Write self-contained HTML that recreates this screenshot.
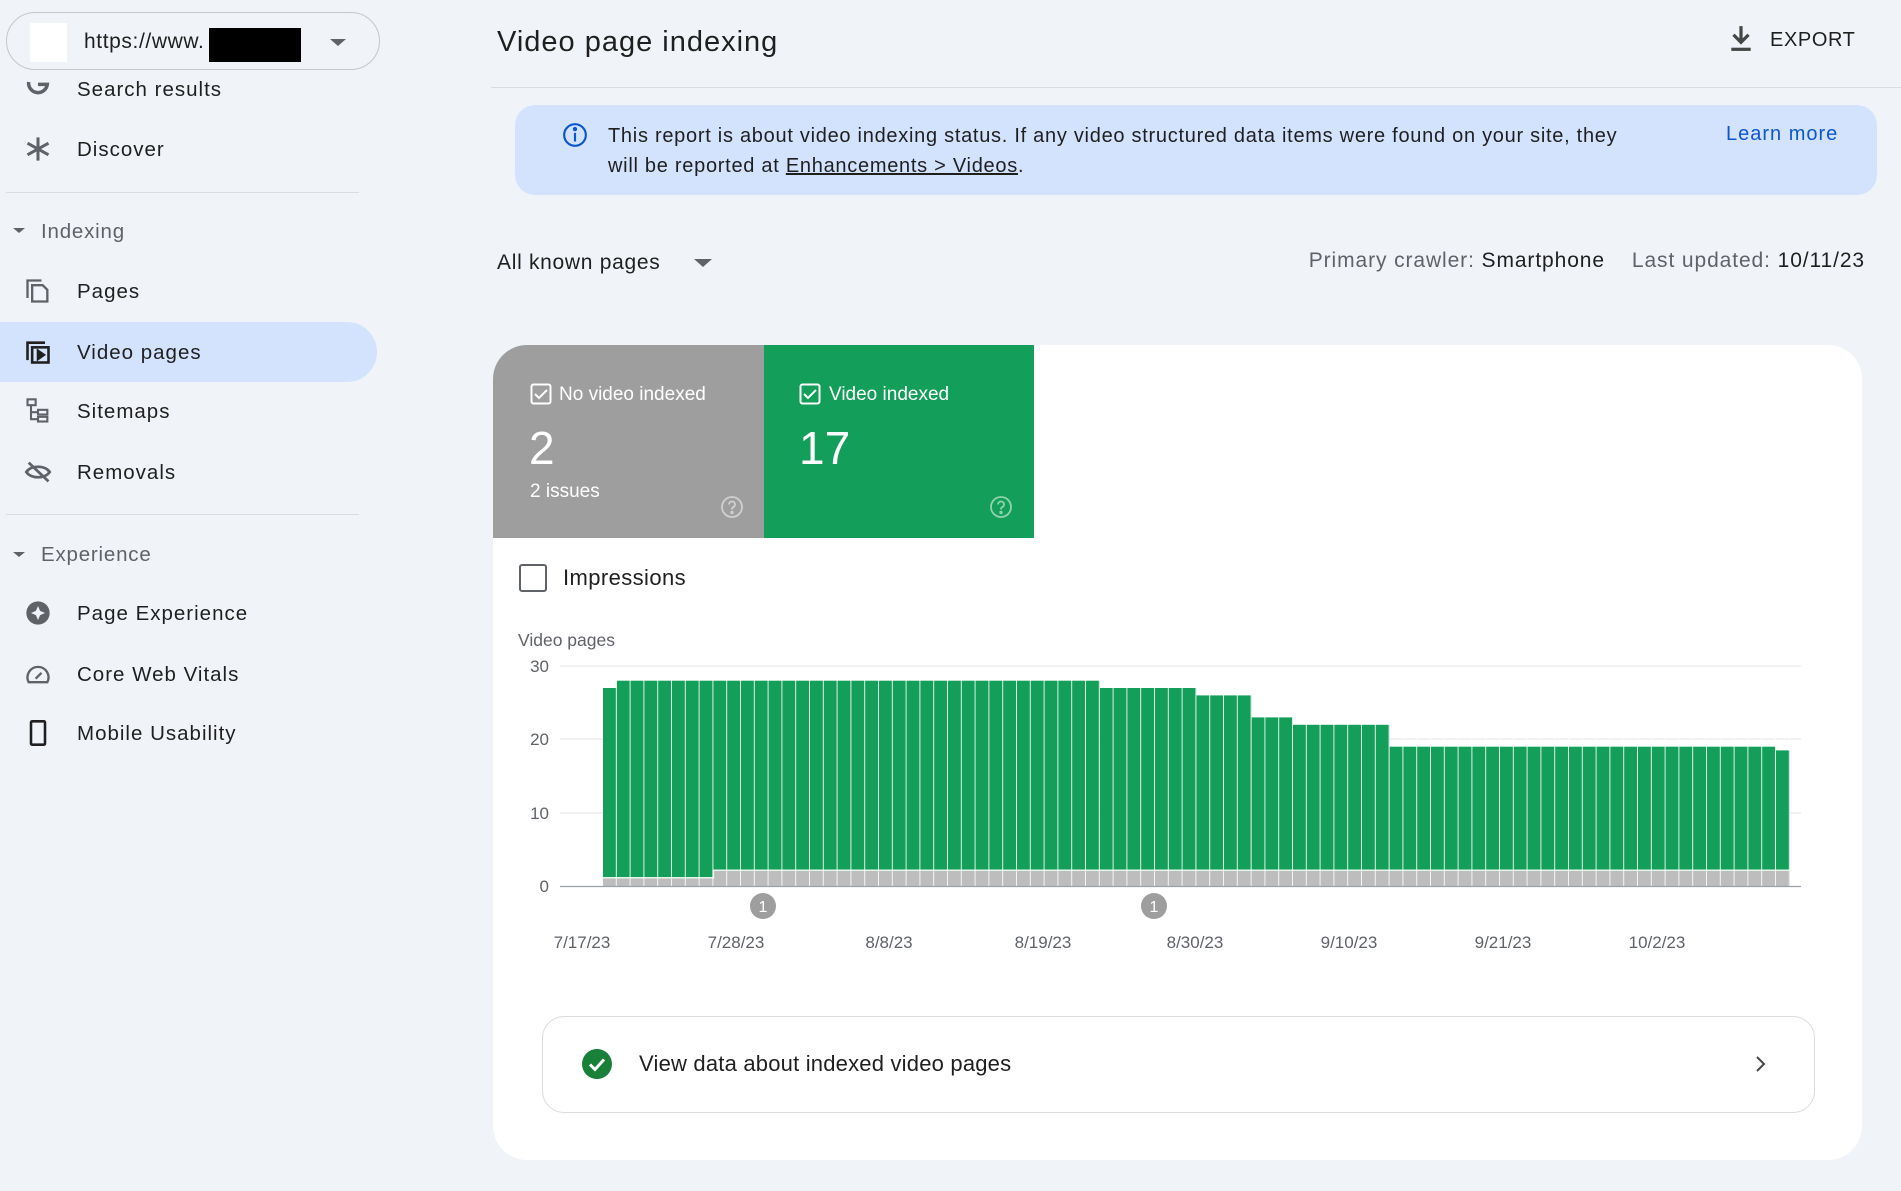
<!DOCTYPE html>
<html><head><meta charset="utf-8"><style>
*{box-sizing:border-box;margin:0;padding:0}
body{width:1901px;height:1191px;background:#f0f4f9;font-family:"Liberation Sans",sans-serif;color:#1f1f1f;position:relative;overflow:hidden}
.a{position:absolute;white-space:nowrap}
.nav{position:absolute;left:77px;font-size:20.5px;letter-spacing:1px;color:#1f1f1f;transform:translateY(-50%)}
.ico{position:absolute;left:24px;width:28px;height:28px;transform:translateY(-50%)}
.sec{position:absolute;left:41px;font-size:20.5px;letter-spacing:0.8px;color:#5f6368;transform:translateY(-50%)}
.tri{position:absolute;width:0;height:0;border-left:6px solid transparent;border-right:6px solid transparent;border-top:6px solid #5f6368}
</style></head><body>

<!-- sidebar -->
<div class="nav" style="top:90px">Search results</div>
<svg class="ico" style="top:89px" viewBox="0 0 24 24"><path d="M4 6a8 8 0 1 0 16 2h-8" fill="none" stroke="#5f6368" stroke-width="3"/></svg>
<div class="a" style="left:6px;top:12px;width:374px;height:58px;border:1px solid #c4c7c5;border-radius:29px;background:#f0f4f9"></div>
<div class="a" style="left:30px;top:23px;width:37px;height:39px;background:#fff"></div>
<div class="a" style="left:84px;top:30px;font-size:21px;letter-spacing:0.6px;color:#1f1f1f">https://www.</div>
<div class="a" style="left:209px;top:28px;width:92px;height:34px;background:#000"></div>
<div class="tri" style="left:330px;top:39px;border-width:7px 8px 0 8px"></div>

<div class="nav" style="top:150px">Discover</div>
<svg class="ico" style="top:149px" viewBox="0 0 24 24"><g stroke="#5f6368" stroke-width="2.6"><path d="M12 2v20M3 7l18 10M3 17l18-10"/></g></svg>
<div class="a" style="left:6px;top:192px;width:353px;height:1px;background:#dadce0"></div>
<div class="tri" style="left:13px;top:228px;border-width:5px 6px 0 6px"></div>
<div class="sec" style="top:232px">Indexing</div>
<div class="nav" style="top:292px">Pages</div>
<svg class="ico" style="top:291px" viewBox="0 0 24 24" fill="none" stroke="#5f6368" stroke-width="2"><path d="M3 18V3h12"/><path d="M7 7h9l4 4v10H7z"/></svg>
<div class="a" style="left:0;top:322px;width:377px;height:60px;background:#d3e3fd;border-radius:0 30px 30px 0"></div>
<div class="nav" style="top:353px">Video pages</div>
<svg class="ico" style="top:352px" viewBox="0 0 24 24" fill="none" stroke="#1f1f1f" stroke-width="2.2"><path d="M3 19V4h15"/><rect x="7" y="8" width="14" height="13"/><path d="M12 11v7l5-3.5z" fill="#1f1f1f"/></svg>
<div class="nav" style="top:412px">Sitemaps</div>
<svg class="ico" style="top:411px" viewBox="0 0 24 24" fill="none" stroke="#5f6368" stroke-width="1.8"><rect x="3" y="2" width="7" height="5"/><rect x="12" y="11" width="8" height="4"/><rect x="12" y="17" width="8" height="4"/><path d="M6 7v12h6M6 13h6"/></svg>
<div class="nav" style="top:473px">Removals</div>
<svg class="ico" style="top:472px" viewBox="0 0 24 24" fill="none" stroke="#5f6368" stroke-width="2.4"><path d="M2 12c4-6 16-6 20 0c-4 6-16 6-20 0z"/><path d="M4 4l17 16"/></svg>
<div class="a" style="left:6px;top:514px;width:353px;height:1px;background:#dadce0"></div>
<div class="tri" style="left:13px;top:552px;border-width:5px 6px 0 6px"></div>
<div class="sec" style="top:555px">Experience</div>
<div class="nav" style="top:614px">Page Experience</div>
<svg class="ico" style="top:613px" viewBox="0 0 24 24"><circle cx="12" cy="12" r="10" fill="#5f6368"/><path d="M12 6l1.8 4.2L18 12l-4.2 1.8L12 18l-1.8-4.2L6 12l4.2-1.8z" fill="#f0f4f9"/></svg>
<div class="nav" style="top:675px">Core Web Vitals</div>
<svg class="ico" style="top:674px" viewBox="0 0 24 24" fill="none" stroke="#5f6368" stroke-width="2"><path d="M4 19a9 9 0 1 1 16 0z"/><path d="M10 16l5-5"/></svg>
<div class="nav" style="top:734px">Mobile Usability</div>
<svg class="ico" style="top:733px" viewBox="0 0 24 24" fill="none" stroke="#1f1f1f" stroke-width="2.2"><rect x="6" y="2" width="12" height="20" rx="1"/></svg>

<!-- header -->
<div class="a" style="left:497px;top:26px;font-size:29px;letter-spacing:1px;color:#1f1f1f">Video page indexing</div>
<svg class="a" style="left:1728px;top:24px" width="26" height="28" viewBox="0 0 24 26"><path d="M12 2v14M5 10l7 7 7-7" fill="none" stroke="#444746" stroke-width="3"/><rect x="3" y="22" width="18" height="3" fill="#444746"/></svg>
<div class="a" style="left:1770px;top:29px;font-size:20px;color:#1f1f1f;letter-spacing:0.6px">EXPORT</div>
<div class="a" style="left:491px;top:87px;width:1410px;height:1px;background:#dadce0"></div>

<!-- banner -->
<div class="a" style="left:515px;top:105px;width:1362px;height:90px;background:#d3e3fd;border-radius:20px"></div>
<svg class="a" style="left:562px;top:122px" width="26" height="26" viewBox="0 0 24 24" fill="none" stroke="#0b57d0" stroke-width="2"><circle cx="12" cy="12" r="10"/><path d="M12 10v8"/><circle cx="12" cy="6.5" r="1" fill="#0b57d0"/></svg>
<div class="a" style="left:608px;top:121px;font-size:20px;line-height:30px;letter-spacing:0.72px;color:#1f1f1f">This report is about video indexing status. If any video structured data items were found on your site, they<br>will be reported at <span style="text-decoration:underline">Enhancements &gt; Videos</span>.</div>
<div class="a" style="left:1726px;top:123px;font-size:20px;letter-spacing:1px;color:#0b57d0">Learn more</div>

<div class="a" style="left:497px;top:251px;font-size:21px;letter-spacing:0.7px;color:#1f1f1f">All known pages</div>
<div class="tri" style="left:694px;top:259px;border-width:8px 9px 0 9px"></div>
<div class="a" style="right:36px;top:249px;font-size:21px;letter-spacing:0.9px;color:#5f6368">Primary crawler: <span style="color:#1f1f1f">Smartphone</span>&nbsp;&nbsp;&nbsp; Last updated: <span style="color:#1f1f1f">10/11/23</span></div>

<!-- card -->
<div class="a" style="left:493px;top:345px;width:1369px;height:815px;background:#fff;border-radius:34px;overflow:hidden">
  <div class="a" style="left:0;top:0;width:271px;height:193px;background:#9e9e9e"></div>
  <div class="a" style="left:271px;top:0;width:270px;height:193px;background:#139e59"></div>
</div>
<svg class="a" style="left:530px;top:383px" width="22" height="22" viewBox="0 0 22 22" fill="none" stroke="#fff" stroke-width="2"><rect x="1.5" y="1.5" width="19" height="19" rx="2"/><path d="M5 11l4 4 8-8"/></svg>
<div class="a" style="left:559px;top:384px;font-size:19px;color:#fff">No video indexed</div>
<div class="a" style="left:529px;top:421px;font-size:46px;color:#fff">2</div>
<div class="a" style="left:530px;top:481px;font-size:19px;color:#fff">2 issues</div>
<svg class="a" style="left:720px;top:495px" width="24" height="24" viewBox="0 0 24 24" fill="none" stroke="#d0d0d0" stroke-width="1.8"><circle cx="12" cy="12" r="10"/><path d="M9 9.5a3 3 0 1 1 4 2.8c-1 .4-1 1.2-1 2.2"/><circle cx="12" cy="17.5" r=".8" fill="#d0d0d0"/></svg>
<svg class="a" style="left:799px;top:383px" width="22" height="22" viewBox="0 0 22 22" fill="none" stroke="#fff" stroke-width="2"><rect x="1.5" y="1.5" width="19" height="19" rx="2"/><path d="M5 11l4 4 8-8"/></svg>
<div class="a" style="left:829px;top:384px;font-size:19px;color:#fff">Video indexed</div>
<div class="a" style="left:799px;top:421px;font-size:46px;color:#fff">17</div>
<svg class="a" style="left:989px;top:495px" width="24" height="24" viewBox="0 0 24 24" fill="none" stroke="#8fd3ae" stroke-width="1.8"><circle cx="12" cy="12" r="10"/><path d="M9 9.5a3 3 0 1 1 4 2.8c-1 .4-1 1.2-1 2.2"/><circle cx="12" cy="17.5" r=".8" fill="#8fd3ae"/></svg>

<div class="a" style="left:519px;top:564px;width:28px;height:28px;border:2px solid #5f6368;border-radius:3px"></div>
<div class="a" style="left:563px;top:565px;font-size:22px;letter-spacing:0.4px;color:#1f1f1f">Impressions</div>
<div class="a" style="left:518px;top:630px;font-size:17.5px;color:#5f6368">Video pages</div>

<!-- chart -->
<svg class="a" style="left:0;top:0" width="1901" height="1191">
<defs><pattern id="g" patternUnits="userSpaceOnUse" x="603" y="0" width="13.8" height="10"><rect x="12.8" y="0" width="1" height="10" fill="#fff" opacity=".85"/></pattern></defs>
<g font-family="Liberation Sans" font-size="17" fill="#5f6368" text-anchor="end">
<text x="549" y="672">30</text><text x="549" y="745">20</text><text x="549" y="819">10</text><text x="549" y="892">0</text></g>
<g stroke="#e8eaed" stroke-width="1.3"><path d="M560 666H1801M560 739H1801M560 813H1801"/></g>
<g fill="#139e59">
<rect x="603" y="688" width="13.8" height="198"/>
<rect x="616.8" y="680.7" width="483" height="205.3"/>
<rect x="1099.8" y="688" width="96.6" height="198"/>
<rect x="1196.4" y="695.4" width="55.2" height="190.6"/>
<rect x="1251.6" y="717.4" width="41.4" height="168.6"/>
<rect x="1293" y="724.8" width="96.6" height="161.2"/>
<rect x="1389.6" y="746.7" width="386.4" height="139.3"/>
<rect x="1776" y="750.4" width="13.8" height="135.6"/>
</g>
<rect x="603" y="877.7" width="110.4" height="8.3" fill="#bdbdbd"/>
<rect x="713.4" y="870.3" width="1076.4" height="15.7" fill="#bdbdbd"/>
<path d="M603 877.7H713.4V870.3H1789.8" fill="none" stroke="#e6f4ea" stroke-width="1.5"/>
<rect x="603" y="670" width="1187" height="216" fill="url(#g)"/>
<path d="M560 886.5H1801" stroke="#9aa0a6" stroke-width="1.3"/>
<circle cx="763" cy="906" r="13" fill="#9e9e9e"/><text x="763" y="912" font-family="Liberation Sans" font-size="16" fill="#fff" text-anchor="middle">1</text>
<circle cx="1154" cy="906" r="13" fill="#9e9e9e"/><text x="1154" y="912" font-family="Liberation Sans" font-size="16" fill="#fff" text-anchor="middle">1</text>
<g font-family="Liberation Sans" font-size="17" fill="#5f6368" text-anchor="middle">
<text x="582" y="948">7/17/23</text><text x="736" y="948">7/28/23</text><text x="889" y="948">8/8/23</text><text x="1043" y="948">8/19/23</text><text x="1195" y="948">8/30/23</text><text x="1349" y="948">9/10/23</text><text x="1503" y="948">9/21/23</text><text x="1657" y="948">10/2/23</text></g>
</svg>

<!-- bottom row -->
<div class="a" style="left:542px;top:1016px;width:1273px;height:97px;border:1px solid #dadce0;border-radius:22px"></div>
<svg class="a" style="left:582px;top:1049px" width="30" height="30" viewBox="0 0 30 30"><circle cx="15" cy="15" r="15" fill="#188038"/><path d="M8 15.5l5 5 9-10" fill="none" stroke="#fff" stroke-width="3"/></svg>
<div class="a" style="left:639px;top:1051px;font-size:22px;letter-spacing:0.2px;color:#1f1f1f">View data about indexed video pages</div>
<svg class="a" style="left:1753px;top:1054px" width="14" height="20" viewBox="0 0 14 20"><path d="M4 3l7 7-7 7" fill="none" stroke="#444746" stroke-width="2"/></svg>
</body></html>
